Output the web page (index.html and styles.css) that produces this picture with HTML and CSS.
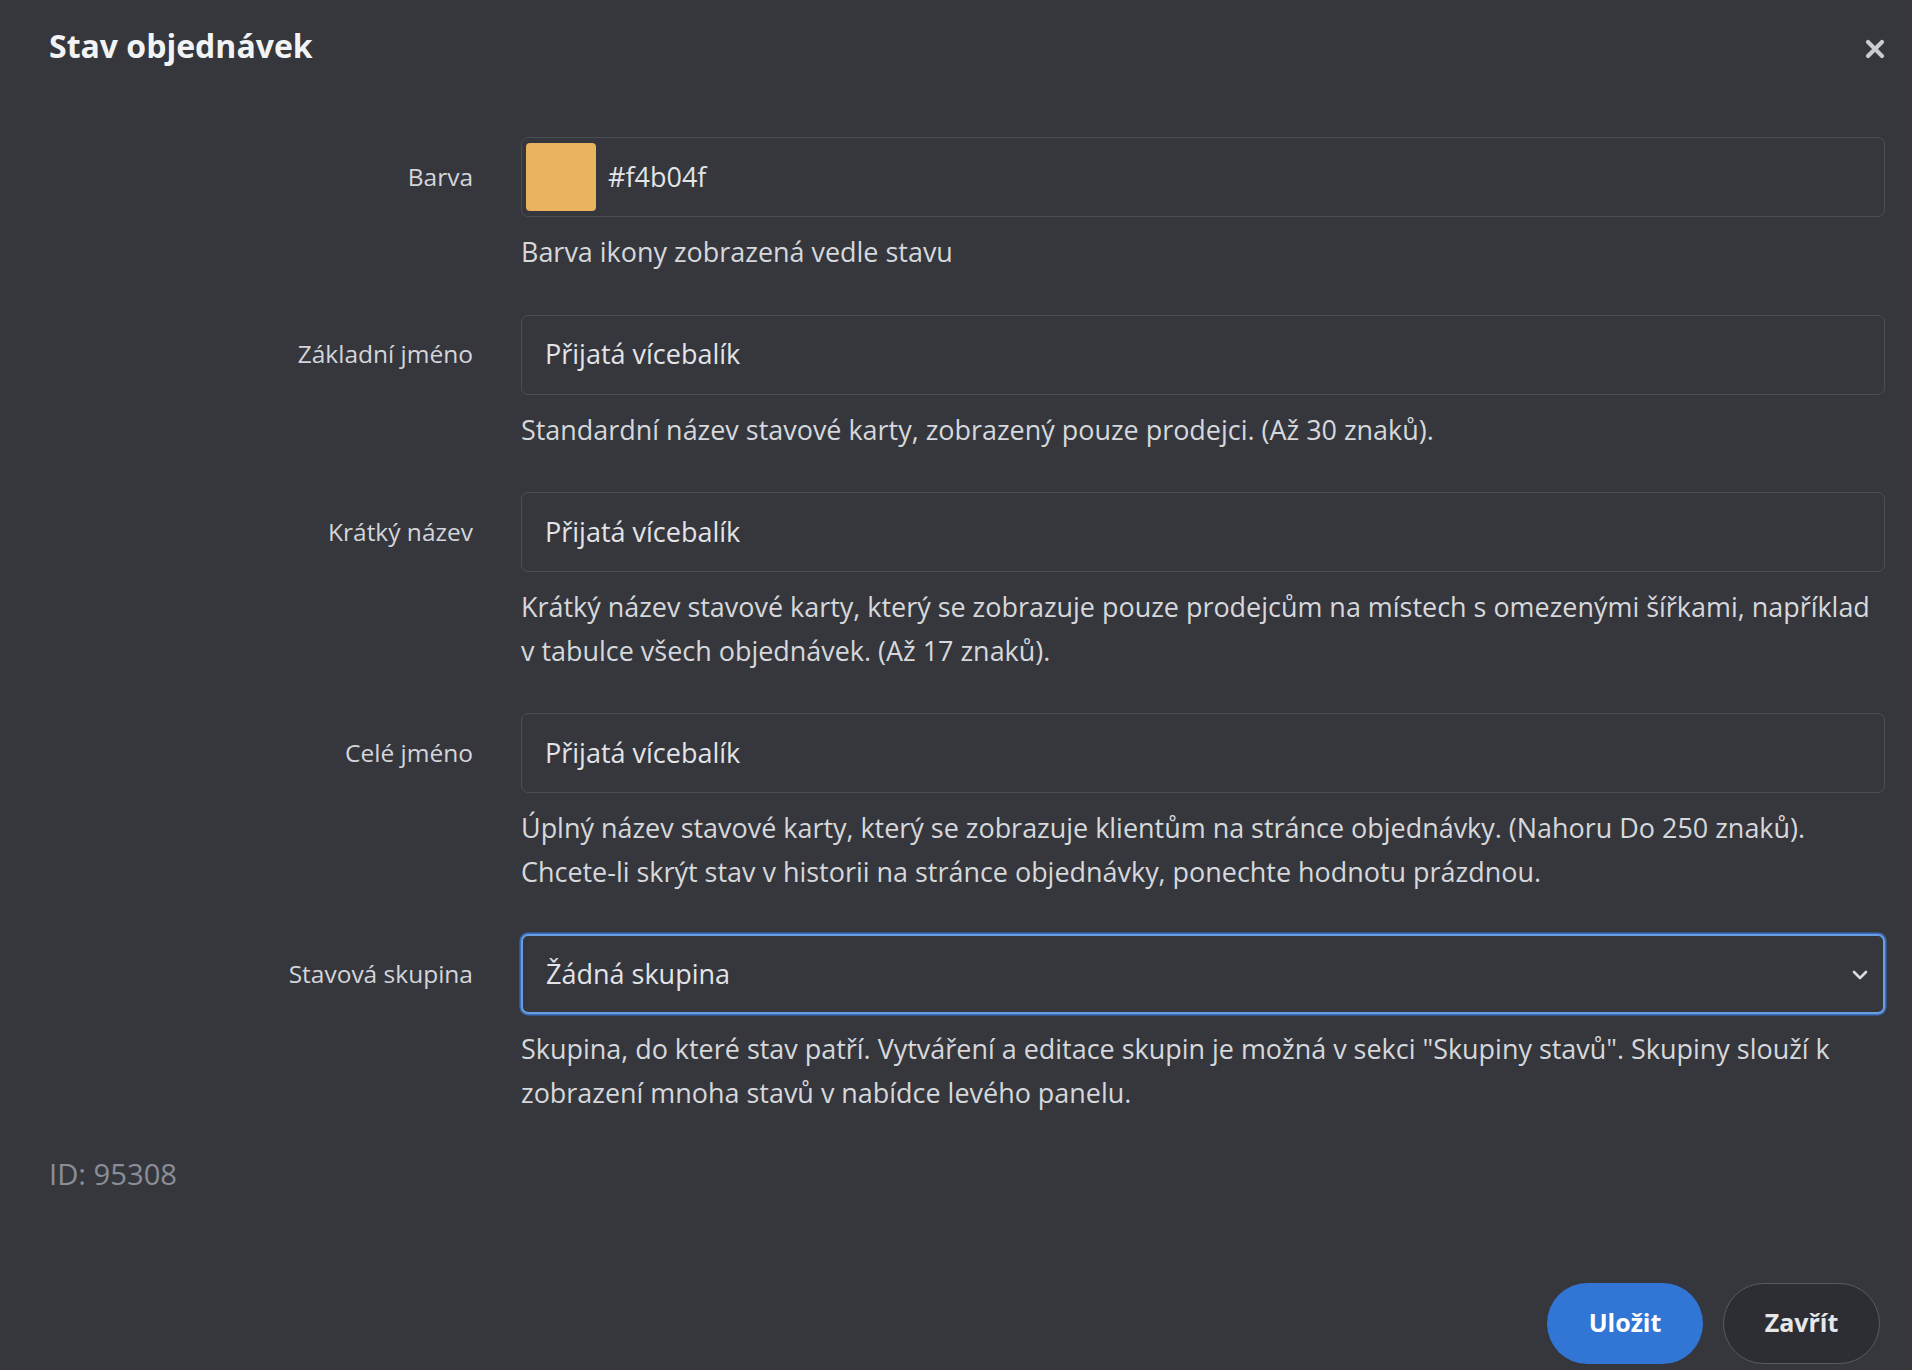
FILE: index.html
```html
<!DOCTYPE html>
<html lang="cs">
<head>
<meta charset="utf-8">
<title>Stav objednávek</title>
<link rel="stylesheet" href="styles.css">
</head>
<body>
<div class="modal">
  <header class="modal-header">
    <h1 class="modal-title">Stav objednávek</h1>
    <button class="close" type="button" aria-label="Zavřít">
      <svg width="20" height="20" viewBox="0 0 20 20"><path d="M3 3 L17 17 M17 3 L3 17" stroke="currentColor" stroke-width="4.2" stroke-linecap="round" fill="none"/></svg>
    </button>
  </header>

  <form class="form">
    <div class="field">
      <label class="label">Barva</label>
      <div class="control">
        <div class="input color-input"><span class="swatch"></span><span class="value">#f4b04f</span></div>
        <p class="help">Barva ikony zobrazená vedle stavu</p>
      </div>
    </div>

    <div class="field">
      <label class="label">Základní jméno</label>
      <div class="control">
        <div class="input"><span class="value">Přijatá vícebalík</span></div>
        <p class="help">Standardní název stavové karty, zobrazený pouze prodejci. (Až 30 znaků).</p>
      </div>
    </div>

    <div class="field">
      <label class="label">Krátký název</label>
      <div class="control">
        <div class="input"><span class="value">Přijatá vícebalík</span></div>
        <p class="help">Krátký název stavové karty, který se zobrazuje pouze prodejcům na místech s omezenými šířkami, například v tabulce všech objednávek. (Až 17 znaků).</p>
      </div>
    </div>

    <div class="field">
      <label class="label">Celé jméno</label>
      <div class="control">
        <div class="input"><span class="value">Přijatá vícebalík</span></div>
        <p class="help">Úplný název stavové karty, který se zobrazuje klientům na stránce objednávky. (Nahoru Do 250 znaků).<br>Chcete-li skrýt stav v historii na stránce objednávky, ponechte hodnotu prázdnou.</p>
      </div>
    </div>

    <div class="field">
      <label class="label">Stavová skupina</label>
      <div class="control">
        <div class="input select"><span class="value">Žádná skupina</span>
          <svg class="chevron" width="16" height="10" viewBox="0 0 16 10"><path d="M2 2 L8 8 L14 2" stroke="currentColor" stroke-width="2.6" stroke-linecap="round" stroke-linejoin="round" fill="none"/></svg>
        </div>
        <p class="help">Skupina, do které stav patří. Vytváření a editace skupin je možná v sekci "Skupiny stavů". Skupiny slouží k zobrazení mnoha stavů v nabídce levého panelu.</p>
      </div>
    </div>
  </form>

  <div class="meta">ID: 95308</div>

  <footer class="actions">
    <button class="btn btn-primary" type="button">Uložit</button>
    <button class="btn btn-secondary" type="button">Zavřít</button>
  </footer>
</div>
</body>
</html>
```
FILE: styles.css
```css
* { box-sizing: border-box; }

html, body {
  margin: 0;
  padding: 0;
  background: #35373d;
}

body {
  font-family: "Open Sans", "Noto Sans", sans-serif;
  color: #d8dade;
}

.modal {
  width: 1912px;
  height: 1370px;
  padding: 0 27px 0 49px;
  display: flex;
  flex-direction: column;
}

.modal-header {
  height: 92px;
  display: flex;
  align-items: center;
  justify-content: space-between;
}

.modal-title {
  margin: 0;
  font-size: 32px;
  font-weight: 700;
  color: #f2f3f5;
  line-height: 1;
}

.close {
  width: 20px;
  height: 20px;
  padding: 0;
  border: 0;
  background: none;
  color: #c9cbd1;
  margin-top: 6px;
  display: flex;
}

.form {
  margin-top: 45px;
  display: flex;
  flex-direction: column;
  gap: 41px;
}

.field {
  display: grid;
  grid-template-columns: 424px 1fr;
  column-gap: 48px;
}

.label {
  height: 80px;
  display: flex;
  align-items: center;
  justify-content: flex-end;
  font-size: 24.5px;
  color: #d3d5da;
  padding-bottom: 2px;
}

.control {
  display: flex;
  flex-direction: column;
}

.input {
  height: 80px;
  border: 1px solid #4b4e56;
  border-radius: 7px;
  display: flex;
  align-items: center;
  padding: 0 23px;
  font-size: 27px;
  color: #e3e4e8;
}

.value { padding-bottom: 2px; }

.color-input {
  padding: 0 0 0 4px;
  gap: 12px;
}

.swatch {
  width: 70px;
  height: 68px;
  border-radius: 4px;
  background: #eab360;
}

.select {
  justify-content: space-between;
  padding-right: 15px;
  border: 2px solid #6a9ee0;
  box-shadow: 0 0 0 1.5px #3a6fbf;
}

.chevron { color: #d9dbe0; margin-top: 2px; }

.help {
  margin: 13px 0 0;
  font-size: 26.95px;
  line-height: 43.5px;
  color: #d6d8dc;
}

.meta {
  margin-top: 39px;
  font-size: 29.2px;
  line-height: 43.5px;
  color: #8a8e97;
}

.actions {
  margin-top: 86px;
  display: flex;
  justify-content: flex-end;
  gap: 20px;
  padding-right: 5px;
}

.btn {
  height: 81px;
  border-radius: 41px;
  font-family: "Open Sans", "Noto Sans", sans-serif;
  font-size: 25px;
  font-weight: 700;
  padding: 0 0 3px;
}

.btn-primary {
  width: 156px;
  background: #3176d5;
  border: 0;
  color: #ffffff;
}

.btn-secondary {
  width: 157px;
  background: #2c2e33;
  border: 1.5px solid #585b64;
  color: #e6e7ea;
}
```
